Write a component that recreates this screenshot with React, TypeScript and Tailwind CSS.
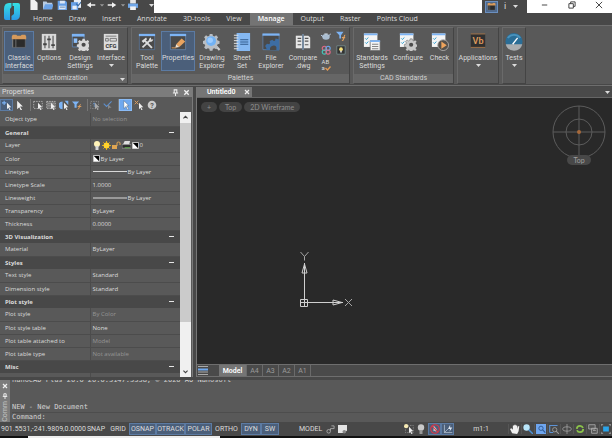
import { useState, type ReactNode } from 'react';
import clsx from 'clsx';

function Svg({ className, box = '0 0 20 20', children }: { className?: string; box?: string; children: ReactNode }) {
  return (
    <svg className={clsx('block shrink-0', className)} viewBox={box} fill="none" aria-hidden="true">
      {children}
    </svg>
  );
}

const gearPath =
  'M-1.2-6h2.4l.4 1.7 1.3.6 1.6-1 1.7 1.7-1 1.6.6 1.3 1.7.4v2.4l-1.7.4-.6 1.3 1 1.6-1.7 1.7-1.6-1-1.3.6-.4 1.7h-2.4l-.4-1.7-1.3-.6-1.6 1-1.7-1.7 1-1.6-.6-1.3-1.7-.4V.3l1.7-.4.6-1.3-1-1.6 1.7-1.7 1.6 1 1.3-.6z';

function Caret() {
  return (
    <Svg className="w-[5px] h-[3px]" box="0 0 5 3">
      <path d="M0 0h5L2.500 3z" fill="#dcdcdc" />
    </Svg>
  );
}

const ribbonIcons: Record<string, ReactNode> = {
  classic: (
    <>
      <path d="M3 3h14v13H3z" fill="#2b2b2b" stroke="#777" strokeWidth=".6" />
      <path d="M3 2h4l1 1h4l1-1h4l1 2v3H2V4z" fill="#d69a5c" />
      <path d="M6.500 7v9M3 7v9" stroke="#8a8a8a" strokeWidth=".8" />
    </>
  ),
  options: (
    <>
      <path d="M2 1h16v18H2z" fill="#d9d9d9" />
      <path d="M5.500 3v14M10 3v14M14.500 3v14" stroke="#5a5a5a" strokeWidth="1.300" />
      <path d="M3.500 12.500h4M8 7h4M12.500 13.500h4" stroke="#444" strokeWidth="2" />
    </>
  ),
  design: (
    <>
      <path d="M1.500 1.500h13v14h-13z" fill="#4b4b4b" stroke="#6290c8" strokeWidth=".8" />
      <path d="M1 1h14v3H1z" fill="#7db4f5" />
      <path d="M3 6h4v5H3z" fill="#8fc0fa" />
      <path d={gearPath} transform="translate(14 12.500)" fill="#d8d8d8" />
      <circle cx="14" cy="13" r="2.300" fill="#4b4b4b" />
    </>
  ),
  cfg: (
    <>
      <path d="M2 1h16v18H2z" fill="#dcdcdc" />
      <path d="M4 3.500h12M4 6h3v3H4zM9 6h7v3H9z" stroke="#666" strokeWidth=".9" />
      <text x="10" y="17" textAnchor="middle" fontSize="6.500" fontWeight="700" fill="#333">
        CFG
      </text>
    </>
  ),
  tool: (
    <>
      <path d="M1.500 1.500h17v17h-17z" fill="#4a4a4a" stroke="#5c7ea8" strokeWidth=".7" />
      <path d="M1 1h18v2.500H1z" fill="#7db4f5" />
      <path d="M5 16L14.500 7" stroke="#ddd" strokeWidth="2" />
      <path d="M17 7a3.200 3.200 0 0 1-4.500 2.500A3.200 3.200 0 0 1 14.500 5v2.500z" fill="#ddd" />
      <path d="M7.500 8.500l8 8" stroke="#ddd" strokeWidth="2.200" />
      <path d="M4 9l5-4 1 2-4 4z" fill="#ddd" />
    </>
  ),
  properties: (
    <>
      <path d="M1.500 1.500h17v17h-17z" fill="#4a4a4a" stroke="#6f93bd" strokeWidth=".7" />
      <path d="M1 1h18v2.500H1z" fill="#7db4f5" />
      <path d="M8 12.500L14 6l4 3.500-6.500 6z" fill="#e8a35f" />
      <path d="M8 12.500l3.500 3-4.500 1z" fill="#f6e3cd" />
      <path d="M3 16.500h5" stroke="#e8a35f" />
    </>
  ),
  drawing: (
    <>
      <path d="M13 13l5.500 6" stroke="#d2d2d2" strokeWidth="2.400" />
      <path d={gearPath} transform="translate(9 8.500) scale(1.250)" fill="#b9bec4" />
      <circle cx="9" cy="9" r="5.500" fill="#72b2f4" />
      <circle cx="8" cy="8" r="3" fill="#9cccff" />
    </>
  ),
  sheet: (
    <>
      <path d="M4 0h15v20H4z" fill="#85b8f2" />
      <path d="M1 2.500h5M1 5.500h5M1 8.500h5M1 11.500h5M1 14.500h5M1 17.500h5" stroke="#e2e2e2" strokeWidth="1.100" />
      <path d="M8 7.500h9M8 10h9M8 12.500h9" stroke="#305a8c" strokeWidth="1.200" />
    </>
  ),
  file: (
    <>
      <path d="M1 1.500h18v17H1z" fill="#4a4a4a" stroke="#6290c8" strokeWidth=".7" />
      <path d="M.500.500h19v2.500H.500z" fill="#7db4f5" />
      <path
        d="M4 19l1-2-1.500-2.500 2-2.500 2.500.5 1-1.500-.5-2 3-1.500 1.500 1.500 1.500-.5.5-2.500 4 1v12.500z"
        fill="#3d6da3"
      />
      <path d="M9 19a4 4 0 0 1 7-3.500V19z" fill="#4a4a4a" />
    </>
  ),
  compare: (
    <>
      <path d="M2 3h7v14H2z" fill="#e6e6e6" />
      <path d="M11 3h5l2 2v12h-7z" fill="#e6e6e6" />
      <path d="M4 6h4M4 9h4M4 13h4M12 6h4M12 9h4M12 13h4" stroke="#555" strokeWidth="1.200" />
      <path d="M10 1v18" stroke="#86a9cf" strokeWidth="1.200" />
    </>
  ),
  standards: (
    <>
      <path d="M1 .500h15v15H1z" fill="#f4f4f4" />
      <path d="M1 .500h15v2H1z" fill="#7db4f5" />
      <path d="M2.500 6l1.200 1.200L6 5M2.500 10.500l1.200 1.200L6 9.500" stroke="#2c9ed0" strokeWidth="1.100" />
      <path d="M8 8.500h11v11H8z" fill="#f4f4f4" stroke="#666" strokeWidth=".8" />
      <path d="M8 8h11v2H8z" fill="#7db4f5" />
      <path d="M10 12.500h7M10 15h7M10 17.500h7" stroke="#777" />
    </>
  ),
  configure: (
    <>
      <path d="M1 .500h15v15H1z" fill="#f4f4f4" />
      <path d="M1 .500h15v2H1z" fill="#7db4f5" />
      <path d="M2.500 6l1.200 1.200L6 5M2.500 10.500l1.200 1.200L6 9.500" stroke="#2c9ed0" strokeWidth="1.100" />
      <path d={gearPath} transform="translate(13.500 12.500)" fill="#c8c8c8" stroke="#555" strokeWidth=".5" />
      <circle cx="13.500" cy="13" r="2.300" fill="#4b4b4b" />
    </>
  ),
  check: (
    <>
      <path d="M1 .500h15v15H1z" fill="#f4f4f4" />
      <path d="M1 .500h15v2H1z" fill="#7db4f5" />
      <path d="M2.500 6l1.200 1.200L6 5M2.500 10.500l1.200 1.200L6 9.500" stroke="#2c9ed0" strokeWidth="1.100" />
      <circle cx="13.500" cy="13.500" r="6" fill="#55504b" stroke="#aaa" />
      <path d="M11.500 9.500l6 4-6 4z" fill="#efa45c" />
    </>
  ),
  vb: (
    <>
      <path d="M2 1.500h16v14H2z" fill="#303030" />
      <path d="M2 1h16M2 16h16" stroke="#b5783f" strokeWidth=".8" />
      <text x="10" y="12.500" textAnchor="middle" fontSize="10" fontWeight="600" fill="#dc9a5d">
        Vb
      </text>
    </>
  ),
  tests: (
    <>
      <circle cx="10" cy="9.500" r="9.500" fill="#2a6d96" />
      <path d="M.800 12.500a9.500 9.500 0 0 0 18.400 0z" fill="#a9adb0" />
      <path d="M3 5.500a9 9 0 0 1 14 0" stroke="#4a93bd" strokeWidth="2" />
      <path d="M8.500 12.500L14 5.500" stroke="#fff" strokeWidth="1.500" />
    </>
  ),
};

function RibbonButton({
  icon,
  lines,
  width,
  active,
  menu,
}: {
  icon: string;
  lines: string[];
  width: string;
  active?: boolean;
  menu?: boolean;
}) {
  return (
    <button
      type="button"
      className={clsx(
        'flex flex-col items-center h-10 pt-px border whitespace-nowrap leading-[8px]',
        width,
        active ? 'bg-[#4b5f7a] border-[#5c7ba3]' : 'border-transparent',
      )}
    >
      <Svg className="w-[18px] h-[18px] mb-[3px]">{ribbonIcons[icon]}</Svg>
      {lines.map((line) => (
        <span key={line}>{line}</span>
      ))}
      {menu && (
        <span className="pt-0.5">
          <Caret />
        </span>
      )}
    </button>
  );
}

function RibbonPanel({ title, menu, children }: { title?: string; menu?: boolean; children: ReactNode }) {
  return (
    <section className="flex flex-col border border-[#444] border-t-[#6a6a6a] border-l-[#6a6a6a]">
      <div className="flex grow px-px pt-[3px]">{children}</div>
      {title && (
        <div className="relative h-[9px] leading-[9px] text-center bg-[#666] text-[#d0d0d0]">
          {title}
          {menu && (
            <span className="absolute right-0.5 top-1">
              <Caret />
            </span>
          )}
        </div>
      )}
    </section>
  );
}

const quickIcons: { name: string; width: string; icon: ReactNode }[] = [
  { name: 'New', width: 'w-[14px]', icon: <path d="M2 0h6l4 4v10H2z" fill="#f2f2f2" /> },
  {
    name: 'Open',
    width: 'w-[14px]',
    icon: (
      <>
        <path d="M0 2h5l1 2h7v9H0z" fill="#b7cbe2" />
        <path d="M3 6h12l-3 7H0z" fill="#6aa2e6" />
      </>
    ),
  },
  {
    name: 'Save',
    width: 'w-[14px]',
    icon: (
      <>
        <path d="M1 1h11l2 2v11H1z" fill="#659fe6" />
        <path d="M4 1h7v4H4zM3 8h9v5H3z" fill="#dbe7f5" />
        <path d="M4 10h7" stroke="#456f9f" />
      </>
    ),
  },
  {
    name: 'Save all',
    width: 'w-[14px]',
    icon: (
      <>
        <path d="M4 0h10v11H4z" fill="#e6edf6" />
        <path d="M0 3h10v11H0z" fill="#659fe6" />
        <path d="M2 8h6v5H2z" fill="#e6edf6" />
        <path d="M7 5l3 3 5-6" stroke="#35669e" strokeWidth="1.500" />
      </>
    ),
  },
  { name: 'Undo', width: 'w-4', icon: <path d="M1 7l6-4v3h6v2H7v3z" fill="#f0f0f0" /> },
  { name: 'Undo list', width: 'w-[5px]', icon: <path d="M4 6h6L7 9z" fill="#999" /> },
  { name: 'Redo', width: 'w-4', icon: <path d="M13 7L7 3v3H1v2h6v3z" fill="#f0f0f0" /> },
  { name: 'Redo list', width: 'w-[5px]', icon: <path d="M4 6h6L7 9z" fill="#999" /> },
  {
    name: 'Print',
    width: 'w-4',
    icon: (
      <>
        <path d="M3 0h8v5H3z" fill="#e6e6e6" />
        <path d="M0 5h14v6H0z" fill="#6fa6e8" />
        <path d="M3 9h8v5H3z" fill="#f2f2f2" />
      </>
    ),
  },
];

const menuTabs = [
  'Home',
  'Draw',
  'Insert',
  'Annotate',
  '3D-tools',
  'View',
  'Manage',
  'Output',
  'Raster',
  'Points Cloud',
];

function TitleBar() {
  const [tab, setTab] = useState('Manage');
  return (
    <header className="flex flex-col bg-[#484848] border-b border-[#6e6e6e]">
      <div className="flex h-[13px]">
        <div className="relative w-[154px] shrink-0 flex items-start pl-[27px]">
          <Svg className="absolute left-1 top-[3px] w-4 h-[17px]" box="0 0 16 17">
            <defs>
              <linearGradient id="logo" x1="0" y1="0" x2="0" y2="1">
                <stop offset="0" stopColor="#35e0e4" />
                <stop offset="1" stopColor="#2b9be8" />
              </linearGradient>
            </defs>
            <path d="M5 0h2.500v4L6 6v11H2q-2 0-2-2V6q0-6 5-6z" fill="url(#logo)" />
            <path d="M8.500 0H14q2 0 2 2v9q0 6-5 6H7.500v-4L10 11V3H8.500z" fill="url(#logo)" />
          </Svg>
          {quickIcons.map(({ name, width, icon }) => (
            <button key={name} type="button" aria-label={name} className={clsx('flex justify-center', width)}>
              <Svg className="w-[10px] h-[10px]" box="0 0 14 14">
                {icon}
              </Svg>
            </button>
          ))}
          <button type="button" aria-label="Customize" className="ml-auto mt-1 flex">
            <Caret />
          </button>
        </div>
        <div className="grow bg-white" />
        <div className="w-[45px] shrink-0 flex items-center">
          <button type="button" aria-label="Interface style" className="ml-[3px] h-3 w-[13px] bg-[#4f6a8e] border border-[#6b8fbf]">
            <Svg className="w-[11px] h-[10px]">{ribbonIcons.classic}</Svg>
          </button>
          <button type="button" aria-label="Information" className="ml-[5px] w-1 text-[9px] leading-[9px] text-[#d8d8d8]">
            i
          </button>
          <button type="button" aria-label="Information list" className="ml-[6px]">
            <Caret />
          </button>
        </div>
        <div className="w-[85px] shrink-0 flex items-start justify-around pl-1 pt-px bg-white">
          {[
            ['Minimize', 'M1 4.500h6'],
            ['Restore', 'M1 3h5v5H1zM3 3V1h5v5H6'],
            ['Close', 'M1 1l7 7M8 1L1 8'],
          ].map(([label, d]) => (
            <button key={label} type="button" aria-label={label}>
              <Svg className="w-2 h-2" box="0 0 9 9">
                <path d={d} stroke="#333" strokeWidth="1" />
              </Svg>
            </button>
          ))}
        </div>
      </div>
      <nav className="flex h-3 pl-[25px]">
        {menuTabs.map((name) => (
          <button
            key={name}
            type="button"
            onClick={() => setTab(name)}
            className={clsx(
              "px-2 h-3 leading-[12px] whitespace-nowrap font-['Open_Sans','Noto_Sans',sans-serif]",
              tab === name && 'bg-[#747474] text-white font-semibold',
            )}
          >
            {name}
          </button>
        ))}
      </nav>
    </header>
  );
}

const miniTools: { name: string; icon: ReactNode }[] = [
  {
    name: 'Render',
    icon: (
      <>
        <ellipse cx="6" cy="7" rx="4.500" ry="3.500" fill="#a9bccf" />
        <path d="M9 6l3-3M0 5l3 2" stroke="#b6cbe3" strokeWidth="1.200" />
        <path d="M4 3.500h4" stroke="#dfe8f2" />
      </>
    ),
  },
  {
    name: 'Filter',
    icon: (
      <>
        <path d="M0 1h9L6 5v4H4V5z" fill="#7db4f5" />
        <path d="M7 12c3 0 2-7 4-7M7 8h4" stroke="#e0a060" strokeWidth="1.400" />
      </>
    ),
  },
  {
    name: 'Materials',
    icon: (
      <>
        <circle cx="4" cy="4" r="2.500" stroke="#e06a86" strokeWidth="1.400" />
        <circle cx="8.500" cy="4" r="2.500" stroke="#6aa8ee" strokeWidth="1.400" />
        <circle cx="4" cy="8.500" r="2.500" stroke="#43c5b9" strokeWidth="1.400" />
        <circle cx="8.500" cy="8.500" r="2.500" stroke="#e06a86" strokeWidth="1.400" />
      </>
    ),
  },
  {
    name: 'Lights',
    icon: (
      <>
        <path d="M1 1h10v10H1z" fill="#333" stroke="#8aa" strokeWidth=".7" />
        <circle cx="6" cy="5" r="2.200" fill="#f8e27a" />
        <path d="M5 7h2v2H5z" fill="#ddd" />
      </>
    ),
  },
];

function Ribbon() {
  return (
    <div className="flex shrink-0 h-[58px] gap-[3px] pt-px pl-0.5 bg-[#595959]">
      <RibbonPanel title="Customization" menu>
        <RibbonButton icon="classic" lines={['Classic', 'Interface']} width="w-[30px]" active />
        <RibbonButton icon="options" lines={['Options']} width="w-[30px]" />
        <RibbonButton icon="design" lines={['Design', 'Settings']} width="w-8" />
        <RibbonButton icon="cfg" lines={['Interface']} width="w-[30px]" menu />
      </RibbonPanel>
      <RibbonPanel title="Palettes">
        <RibbonButton icon="tool" lines={['Tool', 'Palette']} width="w-7" />
        <RibbonButton icon="properties" lines={['Properties']} width="w-[34px]" active />
        <RibbonButton icon="drawing" lines={['Drawing', 'Explorer']} width="w-[34px]" />
        <RibbonButton icon="sheet" lines={['Sheet', 'Set']} width="w-[26px]" />
        <RibbonButton icon="file" lines={['File', 'Explorer']} width="w-8" />
        <RibbonButton icon="compare" lines={['Compare', '.dwg']} width="w-8" />
        <div className="grid grid-cols-2 w-[29px] content-start justify-items-center gap-y-1">
          {miniTools.map(({ name, icon }) => (
            <button key={name} type="button" aria-label={name}>
              <Svg className="w-[10px] h-[10px]" box="0 0 12 12">
                {icon}
              </Svg>
            </button>
          ))}
          <button type="button" aria-label="Spelling" className="flex flex-col text-left text-[6px] leading-[6px]">
            AB
            <span className="flex items-center">
              a
              <Svg className="w-[6px] h-[5px]" box="0 0 6 5">
                <path d="M.500 2l2 2L5.500.500" stroke="#e39a54" strokeWidth="1.300" />
              </Svg>
            </span>
          </button>
        </div>
      </RibbonPanel>
      <RibbonPanel title="CAD Standards">
        <RibbonButton icon="standards" lines={['Standards', 'Settings']} width="w-[34px]" />
        <RibbonButton icon="configure" lines={['Configure']} width="w-[38px]" />
        <RibbonButton icon="check" lines={['Check']} width="w-[25px]" />
      </RibbonPanel>
      <RibbonPanel>
        <RibbonButton icon="vb" lines={['Applications']} width="w-[38px]" menu />
      </RibbonPanel>
      <RibbonPanel>
        <RibbonButton icon="tests" lines={['Tests']} width="w-5" menu />
      </RibbonPanel>
    </div>
  );
}

const cursor = <path d="M7 4l6 6h-3l2 4-1.500.500L9 11l-2 2z" fill="#eee" />;

const paletteTools: { name: string; icon: ReactNode; style?: string; divider?: boolean }[] = [
  {
    name: 'Add to selection',
    icon: <><path d="M3 1v6M0 4h6" stroke="#7db4f5" strokeWidth="1.500" />{cursor}</>,
    style: 'bg-[#4b5f7a] border-[#5c7ba3]',
  },
  { name: 'Select', icon: <path d="M3 1l8 8H7l3 5-2 .5L6 10l-3 3z" fill="#f2f2f2" /> },
  {
    name: 'Window',
    icon: <><path d="M1 2h12v10H1z" stroke="#ccc" strokeDasharray="2 1.500" />{cursor}</>,
    divider: true,
  },
  {
    name: 'Crossing',
    icon: (
      <>
        <path d="M1 2h12v10H1z" fill="#777" stroke="#ccc" strokeDasharray="2 1.500" />
        <path d="M2 5h9M2 8h9" stroke="#999" />
        {cursor}
      </>
    ),
  },
  { name: 'Invert', icon: <><path d="M5 2a5 5 0 0 0 0 11zM8 1h5v6z" fill="#7db4f5" />{cursor}</> },
  {
    name: 'Quick filter',
    icon: (
      <>
        <path d="M0 2h10L6.500 6v5h-3V6z" fill="#7db4f5" />
        <path d="M8 13c3 0 2-7 4-7M8 9h5" stroke="#e0a060" strokeWidth="1.400" />
      </>
    ),
  },
  {
    name: 'Isolate',
    icon: (
      <>
        <path d="M1 2h11v10H1z" stroke="#999" strokeDasharray="2 1.500" />
        <path d="M6 10V4M4 6l2-2 2 2" stroke="#6f9dd3" />
        <path d="M7 4l6 6h-3l2 4-1.500.500L9 11l-2 2z" fill="#aaa" />
      </>
    ),
    divider: true,
  },
  {
    name: 'Apply',
    icon: (
      <>
        <path d="M1 5l4 4 7-7" stroke="#5d8fcd" strokeWidth="1.500" />
        <path d="M7 6l5 5h-3l-2 2z" fill="#888" />
      </>
    ),
  },
  {
    name: 'Pick',
    icon: <path d="M4 1l7 7H8l3 5-2 .5L7 9l-3 3z" fill="#fff" stroke="#345" strokeWidth=".5" />,
    style: 'bg-[#6fa8ee] border-[#8abbf5]',
    divider: true,
  },
  { name: 'Clear', icon: <><path d="M1 1l5 5M6 1L1 6" stroke="#e0a060" strokeWidth="1.300" />{cursor}</> },
  {
    name: 'Help',
    icon: (
      <>
        <circle cx="7" cy="7" r="6" fill="#ccc" />
        <text x="7" y="11" fontSize="10" fontWeight="700" textAnchor="middle" fill="#555">?</text>
      </>
    ),
  },
];

function ColorSwatch() {
  return (
    <Svg className="w-[7px] h-[7px]" box="0 0 8 8">
      <path d="M.500.500h7v7h-7z" fill="#000" stroke="#ddd" />
      <path d="M1 1v6h6z" fill="#fff" />
    </Svg>
  );
}

function LayerValue() {
  return (
    <span className="flex items-center gap-px">
      <Svg className="w-2 h-[9px]" box="0 0 8 9">
        <circle cx="4" cy="3" r="3" fill="#fff3b8" />
        <path d="M2.500 5h3v4h-3z" fill="#d8d8d8" />
      </Svg>
      <Svg className="w-[9px] h-[9px]" box="0 0 10 10">
        <path d="M5 0v10M0 5h10M1.500 1.500l7 7M8.500 1.500l-7 7" stroke="#f3b90a" />
        <circle cx="5" cy="5" r="3.200" fill="#ffd22e" />
      </Svg>
      <Svg className="w-[9px] h-[9px]" box="0 0 9 9">
        <path d="M0 4h5v4H0z" fill="#e0a652" />
        <path d="M5 5V2q0-1 1.500-1T8 2v2" stroke="#e0a652" />
      </Svg>
      <Svg className="w-[9px] h-[9px]" box="0 0 10 10">
        <path d="M3 0h6L8 4H1z" fill="#ddd" />
        <path d="M0 4h10v4H0z" fill="#2b2b2b" stroke="#aaa" strokeWidth=".7" />
        <path d="M3 7.500h6" stroke="#61bb48" />
      </Svg>
      <ColorSwatch />
      <span>0</span>
    </span>
  );
}

function LineValue({ kind }: { kind: 'color' | 'thin' | 'thick' }) {
  return (
    <span className="flex items-center gap-px">
      {kind === 'color' && <ColorSwatch />}
      {kind === 'thin' && <span className="w-[34px] h-px bg-[#d8d8d8]" />}
      {kind === 'thick' && <span className="w-[34px] h-0.5 bg-[#999]" />}
      By Layer
    </span>
  );
}

type Row = { label: string; value?: ReactNode; muted?: boolean };

const rows: Row[] = [
  { label: 'Object type', value: 'No selection', muted: true },
  { label: 'General' },
  { label: 'Layer', value: <LayerValue /> },
  { label: 'Color', value: <LineValue kind="color" /> },
  { label: 'Linetype', value: <LineValue kind="thin" /> },
  { label: 'Linetype Scale', value: '1.0000' },
  { label: 'Lineweight', value: <LineValue kind="thick" /> },
  { label: 'Transparency', value: 'ByLayer' },
  { label: 'Thickness', value: '0.0000' },
  { label: '3D Visualization' },
  { label: 'Material', value: 'ByLayer' },
  { label: 'Styles' },
  { label: 'Text style', value: 'Standard' },
  { label: 'Dimension style', value: 'Standard' },
  { label: 'Plot style' },
  { label: 'Plot style', value: 'By Color', muted: true },
  { label: 'Plot style table', value: 'None' },
  { label: 'Plot table attached to', value: 'Model', muted: true },
  { label: 'Plot table type', value: 'Not available', muted: true },
  { label: 'Misc' },
  { label: 'UCS icon On', value: 'Yes' },
];

function PropertiesPalette() {
  return (
    <aside className="w-[193px] shrink-0 flex flex-col min-h-0 bg-[#595959] border-r border-[#7a7a7a]">
      <div className="flex items-center h-[10px] shrink-0 px-0.5 bg-[#7c7c7c] leading-[10px]">
        <h2 className="grow">Properties</h2>
        <button type="button" aria-label="Pin" className="mr-1">
          <Svg className="w-[7px] h-[7px]" box="0 0 8 8">
            <path d="M2.500 1h3v3.500h-3zM1 4.500h6M4 5v3" stroke="#eee" strokeWidth="1.200" />
          </Svg>
        </button>
        <button type="button" aria-label="Close palette">
          <Svg className="w-[7px] h-[7px]" box="0 0 8 8">
            <path d="M1.500 1.500l5 5M6.500 1.500l-5 5" stroke="#f2f2f2" strokeWidth="1.500" />
          </Svg>
        </button>
      </div>
      <div className="flex items-center h-[15px] shrink-0">
        {paletteTools.map(({ name, icon, style, divider }) => (
          <div key={name} className={clsx('flex', divider && 'ml-1 border-l border-[#777]')}>
            <button
              type="button"
              aria-label={name}
              className={clsx('flex items-center justify-center w-[13px] h-3 border', style ?? 'border-transparent')}
            >
              <Svg className="w-[10px] h-[10px]" box="0 0 14 14">
                {icon}
              </Svg>
            </button>
          </div>
        ))}
      </div>
      <div className="flex grow min-h-0">
        <div className="grow min-h-0 pt-px overflow-hidden">
          <table className="w-full table-fixed border-collapse font-['Open_Sans','Noto_Sans',sans-serif] text-[6px]">
            <tbody>
              {rows.map((row, i) =>
                row.value === undefined ? (
                  <tr key={i} className="h-[13px] bg-[#484848] font-bold">
                    <th colSpan={2} scope="rowgroup" className="p-0 pl-[5px] text-left leading-[12px]">
                      <span className="flex items-center justify-between pr-1.5">
                        {row.label}
                        <span className="w-[5px] h-px bg-[#e6e6e6]" />
                      </span>
                    </th>
                  </tr>
                ) : (
                  <tr key={i} className="h-[13px] border-b border-[#4c4c4c]">
                    <th scope="row" className="w-1/2 p-0 pl-[5px] text-left font-normal leading-[12px] border-r border-[#4c4c4c]">
                      {row.label}
                    </th>
                    <td className={clsx('p-0 pl-0.5 leading-[12px]', row.muted && 'text-[#959595]')}>{row.value}</td>
                  </tr>
                ),
              )}
            </tbody>
          </table>
        </div>
        <div className="w-[11px] mr-px shrink-0 flex flex-col bg-[#f0f0f0]">
          <button type="button" aria-label="Scroll up" className="flex justify-center items-center h-[11px]">
            <Svg className="w-[5px] h-[5px]" box="0 0 6 6">
              <path d="M.500 4L3 1.500 5.500 4" stroke="#444" strokeWidth="1.300" />
            </Svg>
          </button>
          <div className="basis-3/4 bg-[#cbcbcb]" />
          <button type="button" aria-label="Scroll down" className="mt-auto flex justify-center items-center h-[11px]">
            <Svg className="w-[5px] h-[5px]" box="0 0 6 6">
              <path d="M.500 2L3 4.500 5.500 2" stroke="#444" strokeWidth="1.300" />
            </Svg>
          </button>
        </div>
      </div>
    </aside>
  );
}

function Drawing() {
  const [layout, setLayout] = useState('Model');
  return (
    <main className="flex flex-col grow min-w-0 ml-[3px] border-l border-[#777]">
      <div className="flex items-center h-[11px] shrink-0 pr-0.5 bg-[#4a4a4a] border-b border-[#666]">
        <div className="flex items-center gap-2 h-[10px] pl-[10px] pr-0.5 leading-[10px] bg-[#757575] text-white font-semibold">
          Untitled0
          <button type="button" aria-label="Close Untitled0">
            <Svg className="w-[6px] h-[6px]" box="0 0 6 6">
              <path d="M1 1l4 4M5 1L1 5" stroke="#eee" strokeWidth="1.200" />
            </Svg>
          </button>
        </div>
        <button type="button" aria-label="Documents" className="ml-auto">
          <Caret />
        </button>
      </div>
      <div className="relative grow min-h-0 bg-[#292929]">
        <div className="flex gap-0.5 pl-1 pt-1">
          {['+', 'Top', '2D Wireframe'].map((label) => (
            <button
              key={label}
              type="button"
              className="h-[10px] px-1.5 rounded-full bg-[#434343] text-[#8f8f8f] font-['Lato',sans-serif] leading-[10px]"
            >
              {label}
            </button>
          ))}
        </div>
        {/* view compass */}
        <div className="absolute right-[6px] top-[7px] flex flex-col items-center">
          <Svg className="w-[54px] h-[54px]" box="0 0 54 54">
            <circle cx="27" cy="27" r="26" stroke="#5c5c5c" />
            <circle cx="27" cy="27" r="13" stroke="#5c5c5c" />
            <path d="M27 1v52M1 27h52" stroke="#5c5c5c" />
            <circle cx="27" cy="27" r="2" fill="#a8693a" />
          </Svg>
          <button
            type="button"
            className="relative -mt-1 h-[10px] px-1.5 rounded-full bg-[#484848] text-[#a0a0a0] font-['Lato',sans-serif] leading-[10px]"
          >
            Top
          </button>
        </div>
        {/* UCS icon */}
        <Svg className="absolute left-[102px] bottom-[56px] w-[56px] h-[57px]" box="0 0 56 57">
          <g stroke="#cfcfcf">
            <path d="M1.500 48.500h7v7h-7zM5.500 12v43M1.500 51.500H44" />
            <path d="M5.500 13l-2.500 9h5zM43 51.500L34 49v5z" />
            <path d="M1.500 1l4 4.500L9.500 1M5.500 5.500V9.500M46 48l7 7M53 48l-7 7" stroke="#a5a5a5" />
          </g>
        </Svg>
      </div>
      <div className="flex items-center h-[13px] shrink-0 border-t border-b border-[#6e6e6e] bg-[#4a4a4a]">
        <button type="button" aria-label="Layouts" className="ml-px mr-[11px]">
          <Svg className="w-[10px] h-[9px]" box="0 0 10 9">
            <path d="M0 .500h10M0 8.500h10M0 6h10" stroke="#aaa" />
            <path d="M0 3.500h10" stroke="#6fa8ee" strokeWidth="2" />
          </Svg>
        </button>
        {['Model', 'A4', 'A3', 'A2', 'A1'].map((name) => (
          <button
            key={name}
            type="button"
            onClick={() => setLayout(name)}
            className={clsx(
              'h-[11px] leading-[10px] border-r border-[#6a6a6a]',
              name === 'Model' ? 'w-7' : 'w-4',
              layout === name ? 'bg-[#757575] text-white font-semibold' : 'text-[#9a9a9a]',
            )}
          >
            {name}
          </button>
        ))}
      </div>
    </main>
  );
}

function CommandLine() {
  return (
    <section className="flex shrink-0 h-[42px] bg-[#595959]">
      <div className="w-[10px] shrink-0 flex flex-col items-center pt-[3px] bg-[#7c7c7c] overflow-hidden">
        <button type="button" aria-label="Close command line">
          <Svg className="w-[6px] h-[6px]" box="0 0 6 6">
            <path d="M1 1l4 4M5 1L1 5" stroke="#f2f2f2" strokeWidth="1.200" />
          </Svg>
        </button>
        <button type="button" aria-label="Pin command line" className="mt-1">
          <Svg className="w-[6px] h-[6px]" box="0 0 8 8">
            <path d="M2.500 1h3v3.500h-3zM1 4.500h6M4 5v3" stroke="#eee" strokeWidth="1.300" />
          </Svg>
        </button>
        <span className="mt-auto leading-[10px] rotate-180 [writing-mode:vertical-rl] text-[#c4c4c4]">Comm</span>
      </div>
      <div className="grow flex flex-col pl-0.5 font-['DejaVu_Sans_Mono',monospace] text-[#d2d2d2] leading-[9px]">
        <div className="flex flex-col justify-end h-8 overflow-hidden whitespace-pre">
          <p>nanoCAD Plus 20.0 20.0.5147.5558, © 2020 AO Nanosoft</p>
          <p> </p>
          <p> </p>
          <p>NEW - New Document</p>
        </div>
        <div className="flex border-t border-[#4d4d4d]">
          <label htmlFor="command">Command:</label>
          <input id="command" type="text" className="grow h-[9px] ml-1 bg-transparent outline-none" />
        </div>
      </div>
    </section>
  );
}

const statusIcons: { name: string; icon: ReactNode }[] = [
  { name: 'Pan', icon: <path d="M3 13L0 7l2-1 2 2V2h2v5-6h2v6-5h2v5l1-4h2l-1 7-2 4z" fill="#f0f0f0" /> },
  {
    name: 'Zoom',
    icon: (
      <>
        <circle cx="5" cy="5" r="4.500" fill="#b9e6fa" />
        <path d="M8 8l6 6" stroke="#4b92d8" strokeWidth="2" />
      </>
    ),
  },
  {
    name: 'Zoom window',
    icon: (
      <>
        <path d="M0 0h14v14H0z" fill="#6ea5ee" />
        <circle cx="7" cy="6" r="3" stroke="#2d5791" strokeWidth="1.300" />
        <path d="M9 8l4 4" stroke="#2d5791" strokeWidth="1.500" />
      </>
    ),
  },
  {
    name: 'Zoom extents',
    icon: (
      <>
        <path d="M1 12V2h11M1 12h5" stroke="#5c92d4" strokeWidth="1.500" />
        <circle cx="8" cy="8" r="3" stroke="#999" strokeWidth="1.300" />
        <path d="M10 10l4 4" stroke="#999" strokeWidth="1.500" />
      </>
    ),
  },
  {
    name: 'Orbit',
    icon: (
      <>
        <ellipse cx="7" cy="7" rx="6" ry="3" stroke="#aaa" />
        <path d="M7 0v14" stroke="#aaa" />
      </>
    ),
  },
  {
    name: 'Regenerate',
    icon: <circle cx="7" cy="7" r="4.500" stroke="#8bc34a" strokeWidth="2.500" strokeDasharray="12 2" />,
  },
  {
    name: 'Viewports',
    icon: (
      <>
        <path d="M1 1h9v6H1zM5 6h8v7H5z" fill="#555" stroke="#bbb" />
        <path d="M7 9h4" stroke="#bbb" />
      </>
    ),
  },
  {
    name: 'Full screen',
    icon: (
      <>
        <path d="M3 3.500h8v7H3z" fill="#2aa4ea" />
        <path d="M0 3V1h3M11 1h3v2M0 11v2h3M14 11v2h-3" stroke="#bbb" />
      </>
    ),
  },
];

const leftModes: [string, string][] = [
  ['SNAP', 'w-[22px]'],
  ['GRID', 'w-[22px]'],
  ['OSNAP', 'w-[27px]'],
  ['OTRACK', 'w-[29px]'],
  ['POLAR', 'w-[27px]'],
  ['ORTHO', 'w-[29px]'],
  ['DYN', 'w-5'],
  ['SW', 'w-[18px]'],
];

function StatusBar() {
  const [on, setOn] = useState(['OSNAP', 'OTRACK', 'POLAR', 'DYN', 'SW']);
  const toggle = (mode: string) =>
    setOn(on.includes(mode) ? on.filter((m) => m !== mode) : [...on, mode]);

  return (
    <footer className="shrink-0">
      <div className="flex items-center h-[14px] pl-px bg-[#484848] whitespace-nowrap">
        <output className="w-[84px]">901.5531,-241.9809,0.0000</output>
        {leftModes.map(([mode, width]) => (
          <button
            key={mode}
            type="button"
            aria-pressed={on.includes(mode)}
            onClick={() => toggle(mode)}
            className={clsx(
              'h-3 leading-[10px] text-center border',
              width,
              on.includes(mode) ? 'bg-[#4b5f7a] border-[#5c7ba3]' : 'border-transparent',
            )}
          >
            {mode}
          </button>
        ))}
        <button type="button" className="ml-5">MODEL</button>
        <button type="button" aria-label="Lock" className="ml-1">
          <Svg className="w-[9px] h-[9px]" box="0 0 10 10">
            <circle cx="3" cy="7" r="2" stroke="#aaa" />
            <path d="M5 6V4h4V1H6" stroke="#aaa" />
          </Svg>
        </button>
        <button type="button" aria-label="Notes" className="ml-[3px]">
          <Svg className="w-[9px] h-[9px]" box="0 0 10 10">
            <path d="M0 0h10v6L7 9H0z" fill="#e4e4e4" />
            <circle cx="7" cy="7.500" r="2" fill="#888" />
          </Svg>
        </button>
        <div className="flex items-center ml-auto">
          <button type="button" aria-label="Selection light" className="mr-[3px]">
            <Svg className="w-[10px] h-[10px]" box="0 0 14 14">
              <path d="M5 2h8v10H2V7" stroke="#999" strokeDasharray="2 1.500" />
              <circle cx="3" cy="3" r="3" fill="#f6eab4" />
              {cursor}
            </Svg>
          </button>
          <button type="button" aria-label="Bulb" className="mr-[3px]">
            <Svg className="w-2 h-[10px]" box="0 0 8 10">
              <circle cx="4" cy="3.500" r="3.200" fill="#c9c9c9" />
              <path d="M2.500 6h3v4h-3z" fill="#999" />
            </Svg>
          </button>
          <button type="button" aria-label="Disable selection" className="flex justify-center items-center w-[13px] h-3 bg-[#4b5f7a] border border-[#5c7ba3]">
            <Svg className="w-[10px] h-[10px]" box="0 0 14 14">
              <path d="M5 2l5 6H8l1 4-2-3-2 1z" fill="#ddd" />
              <circle cx="7" cy="7" r="6" stroke="#df3545" strokeWidth="1.500" />
              <path d="M3 3l8 8" stroke="#df3545" strokeWidth="1.500" />
            </Svg>
          </button>
          <button type="button" aria-label="Dynamic UCS" className="flex justify-center items-center w-[13px] h-3 bg-[#4b5f7a] border border-[#5c7ba3]">
            <Svg className="w-[10px] h-[10px]" box="0 0 14 14">
              <path d="M2 1v11h11M2 12l5-5" stroke="#bfcbd8" />
              <path d="M10 1L7 7h3l-1 4 4-6h-3z" fill="#dde6f0" />
            </Svg>
          </button>
          <button type="button" className="w-[54px] text-center">m1:1</button>
          {statusIcons.map(({ name, icon }) => (
            <button key={name} type="button" aria-label={name} className="flex justify-center w-[13px] border-l border-[#565656]">
              <Svg className="w-[10px] h-[10px]" box="0 0 14 14">
                {icon}
              </Svg>
            </button>
          ))}
        </div>
      </div>
      <div className="flex h-0.5 bg-[#111]">
        <div className="ml-7 w-48 bg-[#eee]" />
      </div>
    </footer>
  );
}

export default function App() {
  return (
    <div className="flex flex-col h-screen overflow-hidden bg-[#484848] font-['Roboto','Noto_Sans',sans-serif] text-[7px] leading-[9px] text-[#dcdcdc]">
      <TitleBar />
      <Ribbon />
      <div className="flex grow min-h-0 mt-px pt-px mb-[3px] border-t border-[#6e6e6e]">
        <PropertiesPalette />
        <Drawing />
      </div>
      <CommandLine />
      <StatusBar />
    </div>
  );
}
